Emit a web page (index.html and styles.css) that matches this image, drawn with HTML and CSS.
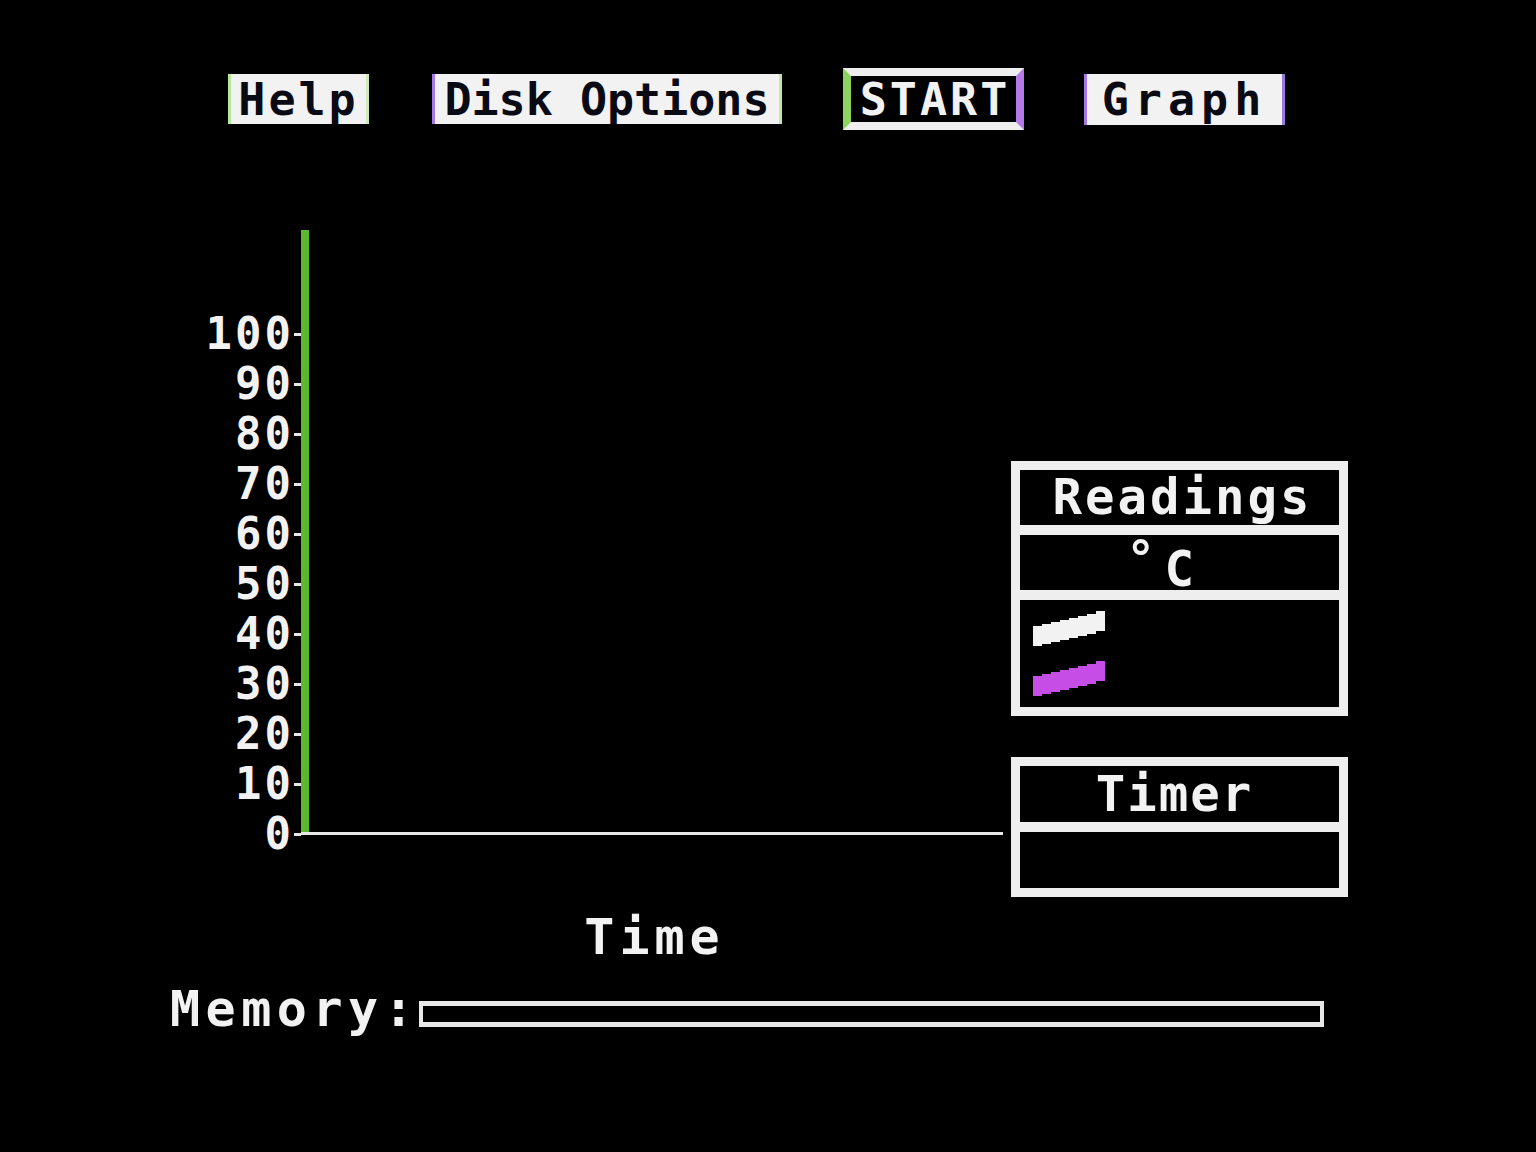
FILE: index.html
```html
<!DOCTYPE html>
<html>
<head>
<meta charset="utf-8">
<title>Temperature Graph</title>
<link rel="stylesheet" href="styles.css">
</head>
<body>
<div class="screen">
  <div class="toolbar">
    <div class="btn btn-help">Help</div>
    <div class="btn btn-disk">Disk Options</div>
    <div class="btn btn-start">START</div>
    <div class="btn btn-graph">Graph</div>
  </div>

  <div class="main">
    <div class="ylabels">
      <div class="yrow"><span class="ynum">100</span><span class="tick"></span></div>
      <div class="yrow"><span class="ynum">90</span><span class="tick"></span></div>
      <div class="yrow"><span class="ynum">80</span><span class="tick"></span></div>
      <div class="yrow"><span class="ynum">70</span><span class="tick"></span></div>
      <div class="yrow"><span class="ynum">60</span><span class="tick"></span></div>
      <div class="yrow"><span class="ynum">50</span><span class="tick"></span></div>
      <div class="yrow"><span class="ynum">40</span><span class="tick"></span></div>
      <div class="yrow"><span class="ynum">30</span><span class="tick"></span></div>
      <div class="yrow"><span class="ynum">20</span><span class="tick"></span></div>
      <div class="yrow"><span class="ynum">10</span><span class="tick"></span></div>
      <div class="yrow"><span class="ynum">0</span><span class="tick"></span></div>
    </div>

    <div class="plotcol">
      <div class="plot"></div>
      <div class="xaxis"></div>
      <div class="xlabel">Time</div>
    </div>

    <div class="panel">
      <div class="box readings">
        <div class="row row-title">Readings</div>
        <div class="row row-unit"><span class="deg">°</span><span class="unit-c">C</span></div>
        <div class="row row-legend">
          <svg class="swatch" width="72" height="35" viewBox="0 0 72 35"><polygon fill="#f2f2f2" points="0,15 9,15 9,13 18,13 18,11 27,11 27,9 36,9 36,7 45,7 45,5 54,5 54,3 63,3 63,0 72,0 72,20 63,20 63,23 54,23 54,25 45,25 45,27 36,27 36,29 27,29 27,31 18,31 18,33 9,33 9,35 0,35"/></svg>
          <svg class="swatch" width="72" height="35" viewBox="0 0 72 35"><polygon fill="#c64ee6" points="0,15 9,15 9,13 18,13 18,11 27,11 27,9 36,9 36,7 45,7 45,5 54,5 54,3 63,3 63,0 72,0 72,20 63,20 63,23 54,23 54,25 45,25 45,27 36,27 36,29 27,29 27,31 18,31 18,33 9,33 9,35 0,35"/></svg>
        </div>
      </div>
      <div class="box timer">
        <div class="row row-title timer-title">Timer</div>
        <div class="row row-empty"></div>
      </div>
    </div>
  </div>

  <div class="memory">
    <div class="mem-label">Memory:</div>
    <div class="mem-bar"></div>
  </div>
</div>
</body>
</html>
```
FILE: styles.css
```css
html, body {
  margin: 0;
  padding: 0;
  background: #000;
}

body {
  width: 1536px;
  height: 1152px;
  overflow: hidden;
  font-family: "DejaVu Sans Mono", "Liberation Mono", monospace;
  font-weight: bold;
  color: #f2f2f2;
}

.screen {
  width: 1536px;
  height: 1152px;
  display: flex;
  flex-direction: column;
}

/* ---------- toolbar ---------- */
.toolbar {
  display: flex;
  align-items: center;
  height: 62px;
  margin-top: 68px;
  padding-left: 228px;
}

.btn {
  display: flex;
  align-items: center;
  justify-content: center;
  box-sizing: border-box;
  background: #f2f2f2;
  color: #0a0a14;
  font-size: 45px;
  line-height: 45px;
}

.btn-help {
  width: 141px;
  height: 50px;
  margin-right: 63px;
  letter-spacing: 3px;
  padding-left: 0;
  border-left: 3px solid #b9e79a;
  border-right: 3px solid #cfeab8;
}

.btn-disk {
  width: 350px;
  height: 50px;
  margin-right: 61px;
  border-left: 3px solid #a37ae6;
  border-right: 3px solid #c3e8a6;
}

.btn-start {
  width: 181px;
  height: 62px;
  margin-right: 60px;
  background: #000;
  color: #f2f2f2;
  border: 8px solid #eeeeee;
  border-left-color: #8ed35f;
  border-right-color: #b57ae8;
  letter-spacing: 3px;
  padding-left: 3px;
}

.btn-graph {
  width: 201px;
  height: 51px;
  letter-spacing: 6px;
  padding-left: 0;
  border-left: 3px solid #a37ae6;
  border-right: 3px solid #9a78e0;
}

/* ---------- main area ---------- */
.main {
  display: flex;
  align-items: flex-start;
  margin-top: 100px;
}

.ylabels {
  width: 301px;
  padding-top: 79px;
  display: flex;
  flex-direction: column;
}

.yrow {
  height: 50px;
  display: flex;
  align-items: center;
  justify-content: flex-end;
}

.ynum {
  font-size: 44px;
  line-height: 50px;
  letter-spacing: 3px;
  margin-right: -1px;
}

.tick {
  width: 7px;
  height: 3px;
  background: #e8e8e8;
  margin-left: 1px;
}

.plotcol {
  width: 702px;
  display: flex;
  flex-direction: column;
}

.plot {
  height: 602px;
  border-left: 8px solid #5cb82e;
}

.xaxis {
  height: 3px;
  background: #e8e8e8;
}

.xlabel {
  margin-top: 77px;
  text-align: center;
  font-size: 50px;
  line-height: 50px;
  letter-spacing: 5px;
  padding-left: 5px;
}

/* ---------- side panel ---------- */
.panel {
  margin-left: 8px;
  margin-top: 231px;
  display: flex;
  flex-direction: column;
}

.box {
  width: 337px;
  box-sizing: border-box;
  border: 9px solid #eeeeee;
  display: flex;
  flex-direction: column;
}

.timer {
  margin-top: 41px;
}

.row + .row {
  border-top: 10px solid #eeeeee;
}

.row-title {
  height: 55px;
  display: flex;
  align-items: center;
  justify-content: center;
  font-size: 49px;
  line-height: 49px;
  letter-spacing: 3px;
  padding-left: 6px;
}

.timer-title {
  height: 56px;
  letter-spacing: 2px;
  padding-left: 0;
  margin-left: -10px;
}

.row-unit {
  height: 55px;
  display: flex;
  align-items: flex-start;
  padding-left: 106px;
  font-size: 49px;
  line-height: 49px;
}

.unit-c {
  margin-top: 10px;
  margin-left: 9px;
}

.row-legend {
  height: 96px;
  padding: 11px 0 0 13px;
  display: flex;
  flex-direction: column;
  gap: 15px;
}

.swatch {
  display: block;
}

.row-empty {
  height: 56px;
}

/* ---------- memory ---------- */
.memory {
  display: flex;
  align-items: flex-start;
  margin-top: 22px;
  padding-left: 170px;
}

.mem-label {
  font-size: 50px;
  line-height: 50px;
  letter-spacing: 5.5px;
}

.mem-bar {
  width: 905px;
  height: 26px;
  box-sizing: border-box;
  margin-top: 17px;
  margin-left: 0;
  border: 5px solid #e8e8e8;
  border-left-width: 4px;
  border-right-width: 4px;
}
```
